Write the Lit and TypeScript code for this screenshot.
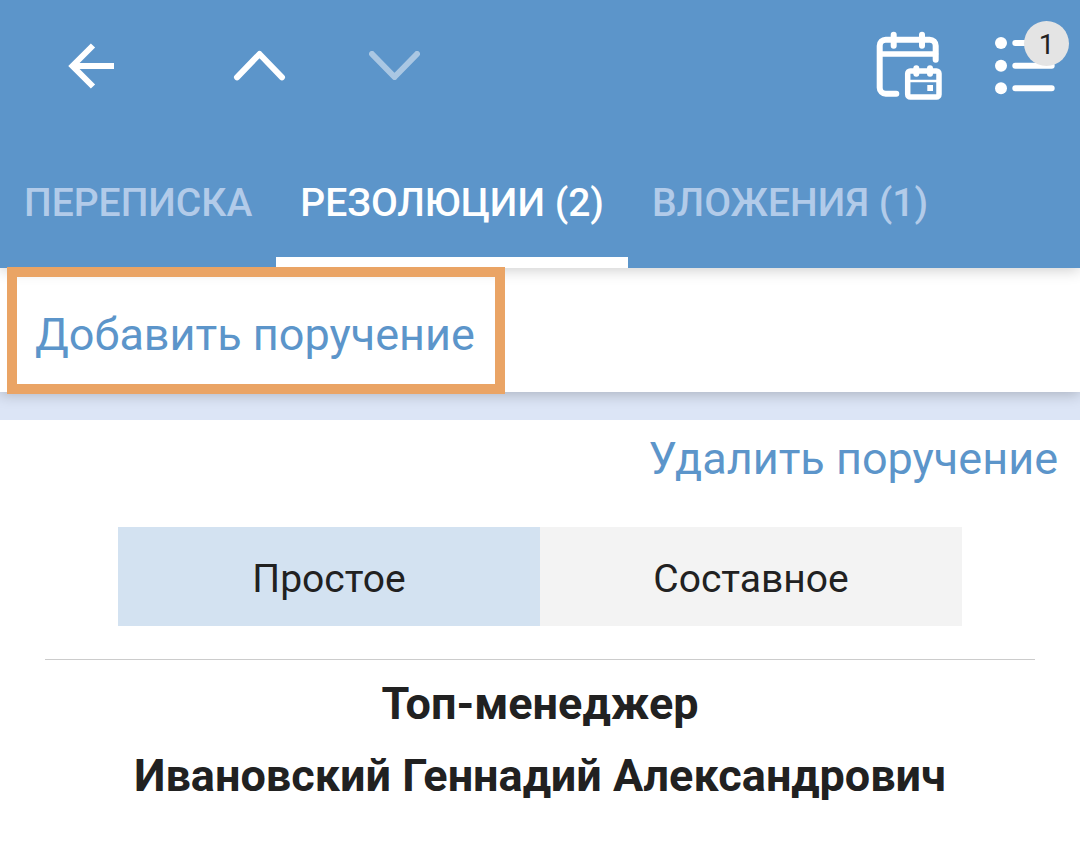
import { LitElement, html, css, svg } from "lit";
import { customElement, state } from "lit/decorators.js";

const backIcon = svg`<path d="M39 17.500 18.500 38 39 58.500M19 38H60" />`;
const upIcon = svg`<path d="M15 49.300 37.500 26 60 49.300" stroke-linecap="round" stroke-linejoin="round" />`;
const downIcon = svg`<path d="M16 26 38.500 49 61 26" stroke-linecap="round" stroke-linejoin="round" />`;
const calendarIcon = svg`
  <g stroke-linecap="round" stroke-linejoin="round">
    <path d="M24.300 65.700H13.700a6 6 0 0 1-6-6V17.700a6 6 0 0 1 6-6H57.700a6 6 0 0 1 6 6V31.700" />
    <path d="M8 26H63.500" stroke-width="5.500" />
    <path d="M21.700 6.700V17.700M50 6.700V17.700" />
    <rect x="35.700" y="43" width="31.300" height="26" rx="2.500" stroke-width="5.500" />
    <path d="M44.300 40.300V45.700M58 40.300V45.700" />
    <path d="M36 53H67" stroke-width="2.500" />
  </g>
  <rect x="55.300" y="57" width="5.700" height="6" fill="#fff" stroke="none" />`;
const listIcon = svg`
  <g fill="#fff" stroke="none">
    <circle cx="9" cy="15" r="6" />
    <circle cx="9" cy="37.700" r="6" />
    <circle cx="9" cy="60.300" r="6" />
  </g>
  <path d="M23.300 15H59.700M23.300 37.700H59.700M23.300 60.300H59.700" stroke-linecap="round" />`;

const glyph = (content: unknown) => html`
  <svg class="glyph" viewBox="0 0 76 76" fill="none" stroke="#fff" stroke-width="6" aria-hidden="true">
    ${content}
  </svg>`;

@customElement("app-root")
export class AppRoot extends LitElement {
  @state() private tab = 1;
  @state() private kind = 0;

  private tabs = ["ПЕРЕПИСКА", "РЕЗОЛЮЦИИ (2)", "ВЛОЖЕНИЯ (1)"];
  private kinds = ["Простое", "Составное"];

  static styles = css`
    :host {
      display: block;
      min-height: 100vh;
      background: #fff;
      color: #212121;
      font-family: Roboto, sans-serif;
    }
    * {
      box-sizing: border-box;
    }
    button {
      margin: 0;
      padding: 0;
      border: 0;
      background: none;
      font: inherit;
      color: inherit;
      cursor: pointer;
    }
    .header {
      position: relative;
      z-index: 1;
      background: #5c95ca;
      box-shadow: 0 2px 14px rgba(0, 0, 0, 0.2);
    }
    .toolbar {
      display: flex;
      justify-content: space-between;
      padding: 28px 12px 28px 54px;
    }
    .history,
    .moves,
    .actions {
      display: flex;
    }
    .history {
      gap: 92px;
    }
    .moves {
      gap: 58px;
    }
    .actions {
      gap: 44px;
    }
    .tool {
      position: relative;
      display: block;
    }
    .tool:disabled {
      opacity: 0.48;
    }
    .glyph {
      display: block;
      width: 76px;
      height: 76px;
    }
    .badge {
      position: absolute;
      top: -7px;
      right: -1px;
      width: 45px;
      height: 45px;
      border-radius: 50%;
      background: #e4e4e4;
      color: #212121;
      font-size: 28px;
      line-height: 48px;
      text-align: center;
    }
    .tabs {
      display: flex;
    }
    .tab {
      padding: 48px 24px 31px;
      border-bottom: 11px solid transparent;
      color: #b2cbe9;
      font-size: 39px;
      font-weight: 500;
      line-height: 46px;
      white-space: nowrap;
    }
    .tab.active {
      border-bottom-color: #fff;
      color: #fff;
    }
    .add-bar {
      position: relative;
      display: flex;
      padding: 9px 17px 8px;
      background: #fff;
      box-shadow: 0 2px 14px rgba(0, 0, 0, 0.24);
    }
    .link {
      color: #5c95ca;
      font-size: 45px;
      line-height: 53px;
    }
    .add {
      position: relative;
      z-index: 2;
      padding: 31px 20px 23px 18px;
      outline: 10px solid #eaa465;
    }
    .list {
      padding-top: 28px;
      background: #dce5f6;
    }
    .card {
      background: #fff;
    }
    .card-actions {
      display: flex;
      justify-content: flex-end;
      padding: 12px 22px 42px;
    }
    .kinds {
      display: flex;
      margin: 0 118px 33px;
    }
    .kind {
      flex: 1;
      padding: 29px 0 24px;
      background: #f3f3f3;
      font-size: 39px;
      line-height: 46px;
    }
    .kind.active {
      background: #d3e2f1;
    }
    .person {
      margin: 0 45px;
      padding-top: 8px;
      border-top: 1px solid #ccc;
      text-align: center;
    }
    .line {
      margin: 0;
      font-size: 45px;
      font-weight: 700;
      line-height: 72px;
    }
  `;

  render() {
    return html`
      <header class="header">
        <div class="toolbar">
          <div class="history">
            <button class="tool" aria-label="Назад">${glyph(backIcon)}</button>
            <div class="moves">
              <button class="tool" aria-label="Предыдущий">${glyph(upIcon)}</button>
              <button class="tool" aria-label="Следующий" disabled>${glyph(downIcon)}</button>
            </div>
          </div>
          <div class="actions">
            <button class="tool" aria-label="Календарь">${glyph(calendarIcon)}</button>
            <button class="tool" aria-label="Список">
              ${glyph(listIcon)}
              <span class="badge">1</span>
            </button>
          </div>
        </div>
        <div class="tabs" role="tablist">
          ${this.tabs.map(
            (label, i) => html`<button
              class="tab ${i === this.tab ? "active" : ""}"
              role="tab"
              aria-selected=${i === this.tab}
              @click=${() => (this.tab = i)}
            >${label}</button>`
          )}
        </div>
      </header>
      <div class="add-bar">
        <button class="link add">Добавить поручение</button>
      </div>
      <main class="list">
        <section class="card">
          <div class="card-actions">
            <button class="link">Удалить поручение</button>
          </div>
          <div class="kinds" role="group" aria-label="Вид поручения">
            ${this.kinds.map(
              (label, i) => html`<button
                class="kind ${i === this.kind ? "active" : ""}"
                aria-pressed=${i === this.kind}
                @click=${() => (this.kind = i)}
              >${label}</button>`
            )}
          </div>
          <div class="person">
            <p class="line">Топ-менеджер</p>
            <p class="line">Ивановский Геннадий Александрович</p>
          </div>
        </section>
      </main>
    `;
  }
}
